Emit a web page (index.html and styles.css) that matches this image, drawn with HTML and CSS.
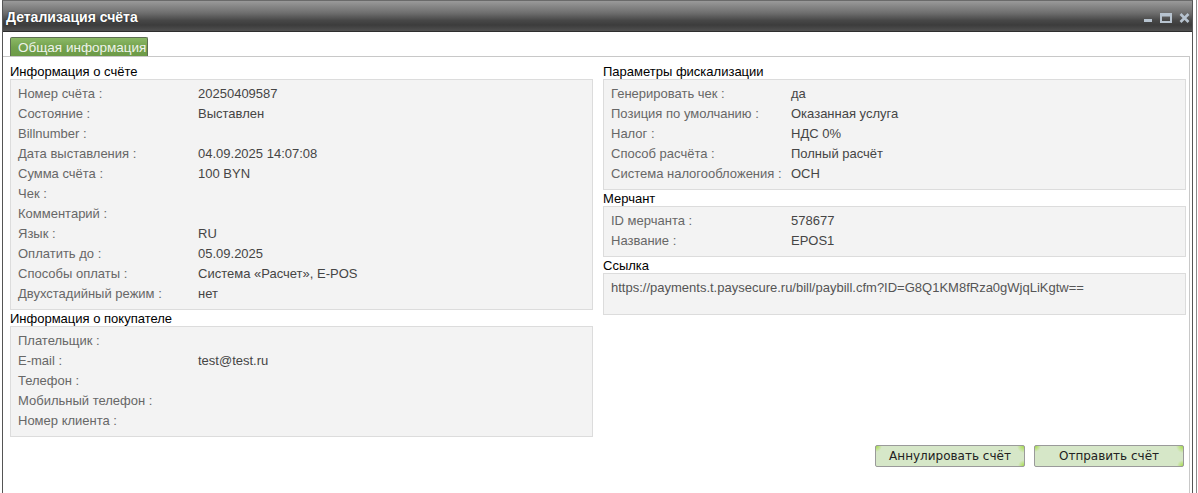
FILE: index.html
```html
<!DOCTYPE html>
<html lang="ru">
<head>
    <meta charset="UTF-8">
    <title>Детализация счёта</title>
    <link rel="stylesheet" href="styles.css">
</head>
<body>
    <div class="frame">
        <div class="window">
            <div class="titlebar">
                <span class="title">Детализация счёта</span>
                <div class="win-controls">
                    <svg width="10" height="10" viewBox="0 0 10 10"><rect x="1" y="6" width="8" height="3" fill="#b7c3cf"/></svg>
                    <svg width="12" height="10" viewBox="0 0 12 10"><rect x="1" y="1" width="10" height="8" fill="none" stroke="#b7c3cf" stroke-width="2"/><rect x="1" y="1" width="10" height="2.5" fill="#b7c3cf"/></svg>
                    <svg width="11" height="10" viewBox="0 0 11 10"><path d="M1.5 1 L9.5 9 M9.5 1 L1.5 9" stroke="#b7c3cf" stroke-width="2.6"/></svg>
                </div>
            </div>

            <div class="tabs">
                <div class="tab active">Общая информация</div>
            </div>

            <div class="panel">
                <div class="columns">
                    <div class="col">
                        <div class="section-title">Информация о счёте</div>
                        <div class="box">
                            <div class="row"><span class="label">Номер счёта :</span><span class="value">20250409587</span></div>
                            <div class="row"><span class="label">Состояние :</span><span class="value">Выставлен</span></div>
                            <div class="row"><span class="label">Billnumber :</span><span class="value"></span></div>
                            <div class="row"><span class="label">Дата выставления :</span><span class="value">04.09.2025 14:07:08</span></div>
                            <div class="row"><span class="label">Сумма счёта :</span><span class="value">100 BYN</span></div>
                            <div class="row"><span class="label">Чек :</span><span class="value"></span></div>
                            <div class="row"><span class="label">Комментарий :</span><span class="value"></span></div>
                            <div class="row"><span class="label">Язык :</span><span class="value">RU</span></div>
                            <div class="row"><span class="label">Оплатить до :</span><span class="value">05.09.2025</span></div>
                            <div class="row"><span class="label">Способы оплаты :</span><span class="value">Система «Расчет», E-POS</span></div>
                            <div class="row"><span class="label">Двухстадийный режим :</span><span class="value">нет</span></div>
                        </div>

                        <div class="section-title">Информация о покупателе</div>
                        <div class="box">
                            <div class="row"><span class="label">Плательщик :</span><span class="value"></span></div>
                            <div class="row"><span class="label">E-mail :</span><span class="value">test@test.ru</span></div>
                            <div class="row"><span class="label">Телефон :</span><span class="value"></span></div>
                            <div class="row"><span class="label">Мобильный телефон :</span><span class="value"></span></div>
                            <div class="row"><span class="label">Номер клиента :</span><span class="value"></span></div>
                        </div>
                    </div>

                    <div class="col">
                        <div class="section-title">Параметры фискализации</div>
                        <div class="box">
                            <div class="row"><span class="label">Генерировать чек :</span><span class="value">да</span></div>
                            <div class="row"><span class="label">Позиция по умолчанию :</span><span class="value">Оказанная услуга</span></div>
                            <div class="row"><span class="label">Налог :</span><span class="value">НДС 0%</span></div>
                            <div class="row"><span class="label">Способ расчёта :</span><span class="value">Полный расчёт</span></div>
                            <div class="row"><span class="label">Система налогообложения :</span><span class="value">ОСН</span></div>
                        </div>

                        <div class="section-title">Мерчант</div>
                        <div class="box">
                            <div class="row"><span class="label">ID мерчанта :</span><span class="value">578677</span></div>
                            <div class="row"><span class="label">Название :</span><span class="value">EPOS1</span></div>
                        </div>

                        <div class="section-title">Ссылка</div>
                        <div class="box link-box">
                            <div class="row"><span class="value">https://payments.t.paysecure.ru/bill/paybill.cfm?ID=G8Q1KM8fRza0gWjqLiKgtw==</span></div>
                        </div>
                    </div>
                </div>

                <div class="actions">
                    <button class="btn">Аннулировать счёт</button>
                    <button class="btn">Отправить счёт</button>
                </div>
            </div>
        </div>
    </div>
</body>
</html>
```

FILE: styles.css
```css
body, html {
    margin: 0;
    padding: 0;
    background-color: #fff;
    font-family: 'Liberation Sans', Arial, sans-serif;
    font-size: 13px;
    height: 100%;
    overflow: hidden;
}

.frame {
    width: 1197px;
    height: 100%;
    border-right: 1px solid #8a8a8a;
    box-sizing: border-box;
}

.window {
    display: flex;
    flex-direction: column;
    margin-left: 2px;
    width: 1191px;
    height: 100%;
    border: 1px solid #555;
    border-top-color: #6a6a6a;
    border-bottom: none;
    box-sizing: border-box;
}

.titlebar {
    display: flex;
    align-items: center;
    justify-content: space-between;
    flex-shrink: 0;
    height: 30px;
    padding: 0 2px 0 3px;
    background: linear-gradient(#9a9a9a, #6e6e6e 40%, #474747 65%, #3c3c3c 80%, #505050);
    border-bottom: 1px solid #2e2e2e;
}

.title {
    color: #fff;
    font-weight: bold;
    font-size: 14px;
    text-shadow: 0 0 2px #222;
    padding-top: 2px;
}

.win-controls {
    display: flex;
    align-items: center;
    gap: 7px;
    padding-top: 4px;
}

.tabs {
    display: flex;
    flex-shrink: 0;
    padding: 5px 0 0 7px;
    height: 19px;
}

.tab {
    width: 138px;
    border: 1px solid #5e6f52;
    border-bottom: none;
    border-radius: 2px 2px 0 0;
    background: linear-gradient(#8bb966, #74a24e 50%, #6c9a47);
    color: #eef3ea;
    padding: 2px 0 0 7px;
    box-sizing: border-box;
    font-size: 13.5px;
    line-height: 16px;
}

.panel {
    flex: 1;
    min-height: 0;
    margin-right: 2px;
    border-top: 1px solid #c8c8c8;
    border-right: 1px solid #c8c8c8;
    padding: 7px 2px 0 7px;
}

.columns {
    display: grid;
    grid-template-columns: 583px 583px;
    gap: 10px;
}

.section-title {
    color: #000;
    line-height: 15px;
    height: 15px;
}

.box {
    background-color: #f3f3f3;
    border: 1px solid #dcdcdc;
    padding: 4px 0 5px 7px;
    margin-bottom: 1px;
}

.row {
    display: flex;
    height: 20px;
    line-height: 20px;
}

.label {
    width: 180px;
    flex-shrink: 0;
    color: #676767;
}

.value {
    color: #454545;
}

.link-box {
    padding-bottom: 16px;
}

.link-box .value {
    color: #555;
}

.actions {
    display: flex;
    justify-content: flex-end;
    gap: 9px;
    margin-top: 7px;
    padding-right: 3px;
}

.btn {
    width: 150px;
    height: 22px;
    border: 1px solid #9a9a9a;
    border-radius: 2px;
    background:
        radial-gradient(circle at 0 0, #a6dc4a 0, rgba(166, 220, 74, 0) 6px),
        radial-gradient(circle at 100% 0, #a6dc4a 0, rgba(166, 220, 74, 0) 7px),
        radial-gradient(circle at 100% 100%, #a6dc4a 0, rgba(166, 220, 74, 0) 6px),
        #d6e7c8;
    font-family: 'DejaVu Sans', Tahoma, sans-serif;
    font-size: 12px;
    color: #222;
    padding: 0;
    cursor: pointer;
}
```
